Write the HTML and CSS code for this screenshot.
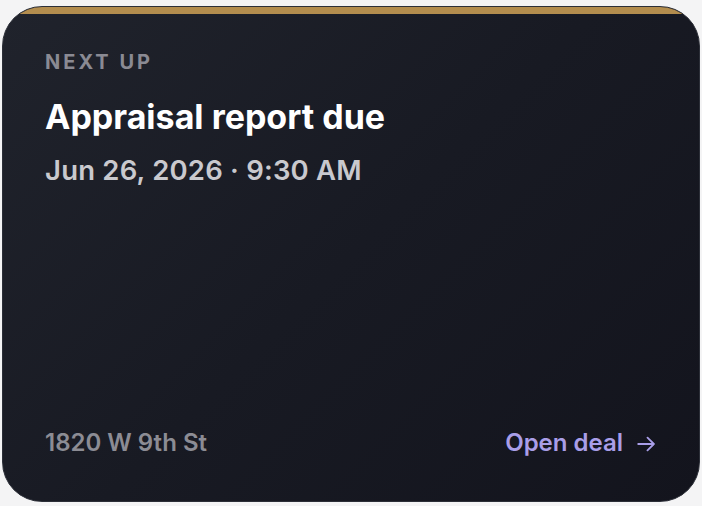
FILE: index.html
```html
<!DOCTYPE html>
<html>
<head>
<meta charset="utf-8">
<link rel="stylesheet" href="styles.css">
</head>
<body>
<div class="card">
  <div class="accent"></div>
  <div class="content">
    <div class="top">
      <div class="eyebrow">NEXT UP</div>
      <div class="title">Appraisal report due</div>
      <div class="when">Jun 26, 2026 · 9:30 AM</div>
    </div>
    <div class="bottom">
      <div class="address">1820 W 9th St</div>
      <a class="link" href="#">Open deal
        <svg class="arrow" width="18" height="16" viewBox="0 0 18 16" fill="none" stroke="currentColor" stroke-width="1.8" stroke-linecap="round" stroke-linejoin="round"><path d="M1.2 8h15.6M10.5 1.6 16.9 8l-6.4 6.4"/></svg>
      </a>
    </div>
  </div>
</div>
</body>
</html>
```
FILE: styles.css
```css
html, body {
  margin: 0;
  padding: 0;
  background: #f4f4f5;
}
body {
  width: 702px;
  height: 506px;
  box-sizing: border-box;
  padding: 6px 2px 4px 2px;
  font-family: Inter, "Noto Sans", sans-serif;
}
.card {
  height: 496px;
  box-sizing: border-box;
  border-radius: 40px;
  overflow: hidden;
  background: linear-gradient(135deg, #20232c 0%, #181a23 50%, #13141d 100%);
  border: 1px solid #2c2f38;
  display: flex;
  flex-direction: column;
}
.accent {
  height: 7px;
  background: #b38d4e;
  flex: none;
}
.content {
  flex: 1;
  display: flex;
  flex-direction: column;
  justify-content: space-between;
  padding: 38px 44px 46px 42px;
}
.eyebrow {
  font-size: 20px;
  font-weight: 700;
  letter-spacing: 3px;
  color: #8a8a93;
  line-height: 20px;
}
.title {
  margin-top: 28px;
  font-size: 34px;
  font-weight: 700;
  color: #ffffff;
  line-height: 34px;
  letter-spacing: 0;
}
.when {
  margin-top: 23px;
  font-size: 27.5px;
  font-weight: 600;
  color: #c9c9ce;
  line-height: 27.5px;
  letter-spacing: 0.2px;
}
.bottom {
  display: flex;
  justify-content: space-between;
  align-items: center;
}
.address {
  font-size: 24px;
  font-weight: 600;
  color: #8c8c94;
  line-height: 24px;
}
.link {
  display: flex;
  align-items: center;
  gap: 14px;
  font-size: 24px;
  font-weight: 600;
  color: #a99ee8;
  text-decoration: none;
  line-height: 24px;
}
.arrow {
  display: block;
  margin-top: 1px;
}
```
